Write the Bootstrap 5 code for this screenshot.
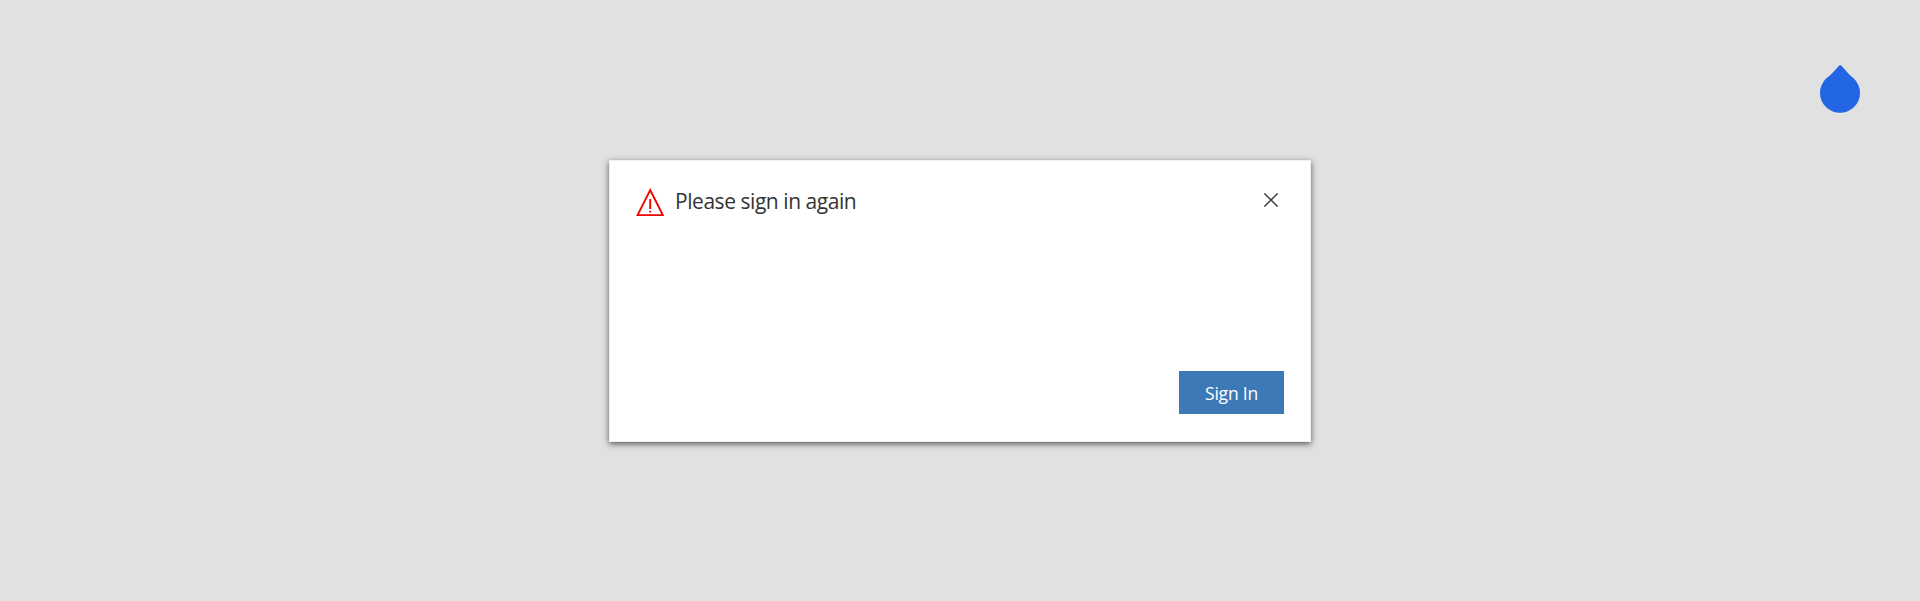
<!DOCTYPE html>
<html lang="en">
<head>
<meta charset="utf-8">
<meta name="viewport" content="width=device-width, initial-scale=1">
<title>Please sign in again</title>
<link href="https://cdn.jsdelivr.net/npm/bootstrap@5.3.0/dist/css/bootstrap.min.css" rel="stylesheet">
<style>
  body { background: #e1e1e1; font-family: "Open Sans", "Noto Sans", sans-serif; color: #333; }
  .dialog { width: 702px; height: 282px; padding: 26px 27px 28px 26px; background: #fff; border: 1px solid #f0f0f0; box-shadow: 0 2px 6px rgba(0,0,0,.62); }
  .dialog-title { font-size: 21px; line-height: 29px; letter-spacing: -.45px; margin-left: 10px; font-weight: 400; }
  .close-btn { margin: 6px 5px 0 0; line-height: 0; }
  .sign-btn { width: 105px; height: 43px; background: #3c79b6; color: #fff; font-size: 17.5px; line-height: 24px; letter-spacing: -.2px; margin-right: -1px; margin-bottom: -1px; padding: 2px 0 0; }
  .drop { top: 64px; right: 60px; }
</style>
</head>
<body class="vh-100 overflow-hidden d-flex align-items-center justify-content-center">
  <main class="dialog d-flex flex-column justify-content-between" role="dialog" aria-labelledby="title">
    <header class="d-flex align-items-start">
      <svg width="29" height="30" viewBox="0 0 29 30" fill="none" stroke="#f00500" aria-hidden="true">
        <path d="M14.2 3 L26.8 28.1 H1.6 Z" stroke-width="1.9"/>
        <path d="M14.2 12V22M14.2 23.8V25.6" stroke-width="1.9"/>
      </svg>
      <h1 id="title" class="dialog-title mb-0">Please sign in again</h1>
      <button type="button" class="close-btn btn p-0 border-0 rounded-0 ms-auto" aria-label="Close">
        <svg width="14" height="14" viewBox="0 0 14 14" stroke="#333" stroke-width="1.3"><path d="M.4.4 13.6 13.6M13.6.4.4 13.6"/></svg>
      </button>
    </header>
    <footer class="d-flex justify-content-end">
      <button type="button" class="sign-btn btn rounded-0 border-0">Sign In</button>
    </footer>
  </main>
  <svg class="drop position-absolute" width="40" height="49" viewBox="0 0 40 49" aria-hidden="true">
    <path fill="#2266e3" d="M19.4 1.4Q20.2 .4 21.2 1.4L29 10.2Q31.2 12.4 33.6 14.2A20 20 0 1 1 6.4 14.2Q9 12.4 11.2 10.2Z"/>
  </svg>
  <script src="https://cdn.jsdelivr.net/npm/bootstrap@5.3.0/dist/js/bootstrap.bundle.min.js"></script>
</body>
</html>
